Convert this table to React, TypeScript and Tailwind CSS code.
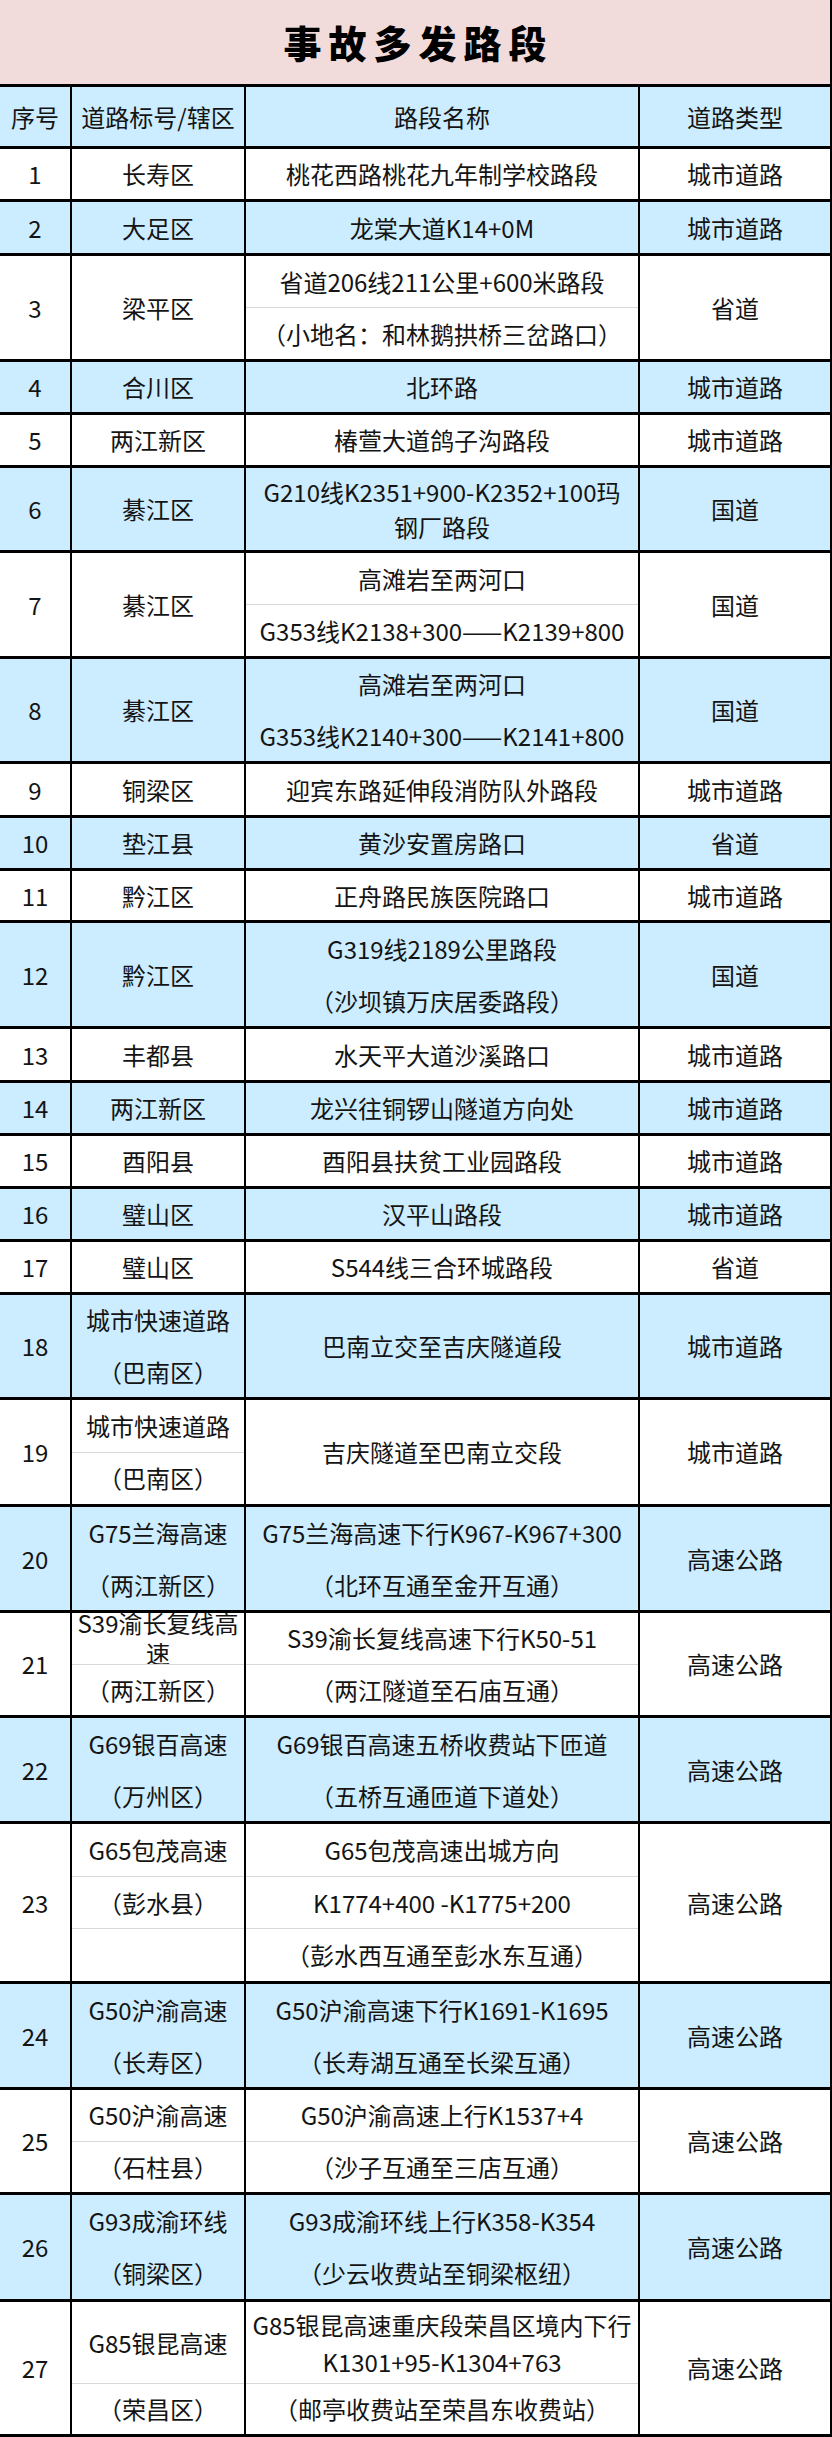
import React from "react";

type Part = { lines: string[]; cls?: string; lead?: string };
type Row = { no: number; h: string; area: Part[]; name: Part[]; type: string };

const p = (...lines: string[]): Part => ({ lines });

const rows: Row[] = [
  { no: 1, h: "h-[53px]", area: [p("长寿区")], name: [p("桃花西路桃花九年制学校路段")], type: "城市道路" },
  { no: 2, h: "h-[54px]", area: [p("大足区")], name: [p("龙棠大道K14+0M")], type: "城市道路" },
  { no: 3, h: "h-[106px]", area: [p("梁平区")], name: [p("省道206线211公里+600米路段"), p("（小地名：和林鹅拱桥三岔路口）")], type: "省道" },
  { no: 4, h: "h-[53px]", area: [p("合川区")], name: [p("北环路")], type: "城市道路" },
  { no: 5, h: "h-[53px]", area: [p("两江新区")], name: [p("椿萱大道鸽子沟路段")], type: "城市道路" },
  { no: 6, h: "h-[85px]", area: [p("綦江区")], name: [{ lines: ["G210线K2351+900-K2352+100玛", "钢厂路段"], lead: "leading-[35px]" }], type: "国道" },
  { no: 7, h: "h-[106px]", area: [p("綦江区")], name: [p("高滩岩至两河口"), p("G353线K2138+300——K2139+800")], type: "国道" },
  { no: 8, h: "h-[105px]", area: [p("綦江区")], name: [p("高滩岩至两河口"), p("G353线K2140+300——K2141+800")], type: "国道" },
  { no: 9, h: "h-[54px]", area: [p("铜梁区")], name: [p("迎宾东路延伸段消防队外路段")], type: "城市道路" },
  { no: 10, h: "h-[53px]", area: [p("垫江县")], name: [p("黄沙安置房路口")], type: "省道" },
  { no: 11, h: "h-[52px]", area: [p("黔江区")], name: [p("正舟路民族医院路口")], type: "城市道路" },
  { no: 12, h: "h-[106px]", area: [p("黔江区")], name: [p("G319线2189公里路段"), p("（沙坝镇万庆居委路段）")], type: "国道" },
  { no: 13, h: "h-[54px]", area: [p("丰都县")], name: [p("水天平大道沙溪路口")], type: "城市道路" },
  { no: 14, h: "h-[53px]", area: [p("两江新区")], name: [p("龙兴往铜锣山隧道方向处")], type: "城市道路" },
  { no: 15, h: "h-[53px]", area: [p("酉阳县")], name: [p("酉阳县扶贫工业园路段")], type: "城市道路" },
  { no: 16, h: "h-[53px]", area: [p("璧山区")], name: [p("汉平山路段")], type: "城市道路" },
  { no: 17, h: "h-[53px]", area: [p("璧山区")], name: [p("S544线三合环城路段")], type: "省道" },
  { no: 18, h: "h-[105px]", area: [p("城市快速道路"), p("（巴南区）")], name: [p("巴南立交至吉庆隧道段")], type: "城市道路" },
  { no: 19, h: "h-[107px]", area: [p("城市快速道路"), p("（巴南区）")], name: [p("吉庆隧道至巴南立交段")], type: "城市道路" },
  { no: 20, h: "h-[106px]", area: [p("G75兰海高速"), p("（两江新区）")], name: [p("G75兰海高速下行K967-K967+300"), p("（北环互通至金开互通）")], type: "高速公路" },
  { no: 21, h: "h-[105px]", area: [p("S39渝长复线高", "速"), p("（两江新区）")], name: [p("S39渝长复线高速下行K50-51"), p("（两江隧道至石庙互通）")], type: "高速公路" },
  { no: 22, h: "h-[106px]", area: [p("G69银百高速"), p("（万州区）")], name: [p("G69银百高速五桥收费站下匝道"), p("（五桥互通匝道下道处）")], type: "高速公路" },
  { no: 23, h: "h-[160px]", area: [p("G65包茂高速"), p("（彭水县）"), p()], name: [p("G65包茂高速出城方向"), p("K1774+400 -K1775+200"), p("（彭水西互通至彭水东互通）")], type: "高速公路" },
  { no: 24, h: "h-[106px]", area: [p("G50沪渝高速"), p("（长寿区）")], name: [p("G50沪渝高速下行K1691-K1695"), p("（长寿湖互通至长梁互通）")], type: "高速公路" },
  { no: 25, h: "h-[105px]", area: [p("G50沪渝高速"), p("（石柱县）")], name: [p("G50沪渝高速上行K1537+4"), p("（沙子互通至三店互通）")], type: "高速公路" },
  { no: 26, h: "h-[107px]", area: [p("G93成渝环线"), p("（铜梁区）")], name: [p("G93成渝环线上行K358-K354"), p("（少云收费站至铜梁枢纽）")], type: "高速公路" },
  {
    no: 27,
    h: "h-[135px]",
    area: [{ lines: ["G85银昆高速"], cls: "h-[81px] shrink-0" }, p("（荣昌区）")],
    name: [
      { lines: ["G85银昆高速重庆段荣昌区境内下行", "K1301+95-K1304+763"], cls: "h-[81px] shrink-0", lead: "leading-[37px]" },
      p("（邮亭收费站至荣昌东收费站）"),
    ],
    type: "高速公路",
  },
];

const Cell = ({ parts, blue, w }: { parts: Part[]; blue: boolean; w: string }) => (
  <div className={`flex flex-col border-r-2 border-black ${w}`}>
    {parts.map((pt, i) => (
      <div
        key={i}
        className={`flex items-center justify-center overflow-hidden ${pt.cls ?? "flex-1"} ${
          i > 0 ? (blue ? "border-t border-transparent" : "border-t border-[#d9d9d9]") : ""
        }`}
      >
        <div className={`text-center whitespace-nowrap ${pt.lead ?? "leading-[30px]"}`}>
          {pt.lines.map((l, j) => (
            <div key={j}>{l}</div>
          ))}
        </div>
      </div>
    ))}
  </div>
);

export default function App() {
  return (
    <div className="w-[832px] bg-white text-[24px] text-[#141414] font-['Noto_Sans_CJK_SC','Noto_Sans',sans-serif]">
      <div className="h-[87px] flex items-center justify-center bg-[#f2dcdb] border-b-[3px] border-r-2 border-black">
        <span className="text-[38px] font-black tracking-[7px] pl-[7px] text-black leading-none">事故多发路段</span>
      </div>
      <div className="h-[62px] flex bg-[#ccecff] border-b-[3px] border-black">
        <div className="w-[72px] border-r-2 border-black flex items-center justify-center">序号</div>
        <div className="w-[174px] border-r-2 border-black flex items-center justify-center">道路标号/辖区</div>
        <div className="w-[394px] border-r-2 border-black flex items-center justify-center">路段名称</div>
        <div className="w-[192px] border-r-2 border-black flex items-center justify-center">道路类型</div>
      </div>
      {rows.map((r) => {
        const blue = r.no % 2 === 0;
        return (
          <div key={r.no} className={`flex border-b-[3px] border-black ${r.h} ${blue ? "bg-[#ccecff]" : "bg-white"}`}>
            <div className="w-[72px] border-r-2 border-black flex items-center justify-center">{r.no}</div>
            <Cell parts={r.area} blue={blue} w="w-[174px]" />
            <Cell parts={r.name} blue={blue} w="w-[394px]" />
            <div className="w-[192px] border-r-2 border-black flex items-center justify-center">{r.type}</div>
          </div>
        );
      })}
    </div>
  );
}
